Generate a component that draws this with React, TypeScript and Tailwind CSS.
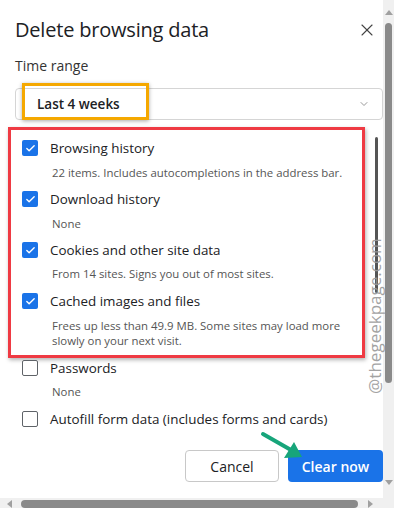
import React from 'react';
import { Check, ChevronDown, X } from 'lucide-react';

const items = [
  { label: 'Browsing history', desc: ['22 items. Includes autocompletions in the address bar.'], checked: true },
  { label: 'Download history', desc: ['None'], checked: true },
  { label: 'Cookies and other site data', desc: ['From 14 sites. Signs you out of most sites.'], checked: true },
  {
    label: 'Cached images and files',
    desc: ['Frees up less than 49.9 MB. Some sites may load more', 'slowly on your next visit.'],
    checked: true,
  },
];

const CheckRow = ({ label, checked }: { label: string; checked: boolean }) => (
  <div className="flex items-center h-[20px] gap-[12px]">
    {checked ? (
      <div className="w-[16px] h-[16px] rounded-[2px] bg-[#1a73e8] flex items-center justify-center">
        <Check className="w-[11px] h-[11px] text-white" strokeWidth={3} />
      </div>
    ) : (
      <div className="w-[16px] h-[16px] rounded-[2px] border-[1.5px] border-[#5f6368] bg-white" />
    )}
    <span className="text-[13.4px] text-[#202124]">{label}</span>
  </div>
);

const Desc = ({ lines, className }: { lines: string[]; className?: string }) => (
  <div
    className={`pl-[30px] text-[11.4px] text-[#555] ${lines.length > 1 ? 'leading-[15px]' : 'leading-[16px]'} ${className ?? ''}`}
  >
    {lines.map((l) => (
      <div key={l}>{l}</div>
    ))}
  </div>
);

export default function App() {
  return (
    <div
      className="w-[394px] h-[508px] flex flex-col bg-white overflow-hidden"
      style={{ fontFamily: '"Open Sans", "Noto Sans", sans-serif' }}
    >
      <div className="flex flex-1 min-h-0">
        {/* Dialog */}
        <div className="flex-1 relative">
          <div className="pl-[15px] pt-[16px] pr-[6px] flex items-center justify-between">
            <h1 className="text-[20px] leading-[28px] font-medium text-[#202124] tracking-[-0.2px]">
              Delete browsing data
            </h1>
            <X className="w-[20px] h-[20px] text-[#444]" strokeWidth={1.3} />
          </div>

          <div className="pl-[15px] mt-[12px] text-[14px] leading-[20px] text-[#333]">Time range</div>

          <div className="relative ml-[15px] mt-[12px] h-[32px] border border-[#d5d5d5] rounded-[4px] flex items-center justify-between pl-[21px] pr-[12px]">
            <span className="text-[13.5px] font-semibold text-[#202124]">Last 4 weeks</span>
            <ChevronDown className="w-[12px] h-[12px] text-[#777]" strokeWidth={1.5} />
            <div className="absolute left-[6px] top-[-6px] w-[127px] h-[37px] border-[3px] border-[#f5a800] shadow-[0_1px_4px_rgba(0,0,0,0.35)]" />
          </div>

          <div className="flex">
            <div className="mt-[7px] ml-[8px] w-[357px] border-[3px] border-[#ef3a43] shadow-[1px_2px_4px_rgba(0,0,0,0.3)] pl-[11px] pt-[8px] pb-[7px]">
              {items.map((it, i) => (
                <div key={it.label} className={i === 0 ? '' : i === 3 ? 'mt-[9px]' : 'mt-[8px]'}>
                  <CheckRow label={it.label} checked={it.checked} />
                  <Desc lines={it.desc} className={i === 2 ? 'mt-[6px]' : 'mt-[7px]'} />
                </div>
              ))}
            </div>
            {/* inner scrollbar */}
            <div className="ml-[10px] mt-[17px] w-[3px] h-[156px] bg-[#555] rounded-full" />
          </div>

          <div className="pl-[22px]">
            <CheckRow label="Passwords" checked={false} />
            <Desc lines={['None']} className="mt-[6px]" />
            <div className="mt-[9px]">
              <CheckRow label="Autofill form data (includes forms and cards)" checked={false} />
            </div>
          </div>

          <div className="mt-[21px] flex justify-end gap-[9px]">
            <button className="w-[94px] h-[32px] rounded-[4px] border border-[#c8c8c8] text-[14px] font-medium text-[#202124] bg-white">
              Cancel
            </button>
            <button className="w-[95px] h-[32px] rounded-[4px] bg-[#1a73e8] text-[14px] font-semibold text-white">
              Clear now
            </button>
          </div>

          {/* watermark */}
          <div className="absolute left-[292px] top-[306px] w-[166px] text-center text-[17px] leading-[20px] text-[#9a9a9a] -rotate-90 opacity-90">
            @thegeekpage.com
          </div>

          {/* green arrow */}
          <svg className="absolute left-[258px] top-[428px]" width="48" height="34" viewBox="0 0 48 34">
            <line x1="5" y1="6" x2="33" y2="22" stroke="#17a57a" strokeWidth="4" strokeLinecap="round" />
            <polygon points="44,29 26,30 36,14" fill="#17a57a" />
          </svg>
        </div>

        {/* page scrollbar */}
        <div className="w-[11px] bg-[#f0f0f0] flex flex-col items-center">
          <div className="mt-[10px] w-0 h-0 border-l-[4px] border-r-[4px] border-b-[5px] border-l-transparent border-r-transparent border-b-[#a0a0a0]" />
          <div className="mt-[8px] w-[7px] h-[360px] rounded-full bg-[#8a8a8a]" />
          <div className="flex-1" />
          <div className="mb-[13px] w-0 h-0 border-l-[4px] border-r-[4px] border-t-[5px] border-l-transparent border-r-transparent border-t-[#a0a0a0]" />
        </div>
      </div>

      {/* horizontal scrollbar */}
      <div className="h-[10px] bg-[#f0f0f0] flex items-start">
        <div className="ml-[7px] mt-[2px] w-0 h-0 border-t-[4px] border-b-[4px] border-r-[5px] border-t-transparent border-b-transparent border-r-[#a0a0a0]" />
        <div className="ml-[9px] mt-[2px] w-[337px] h-[8px] rounded-full bg-[#8a8a8a]" />
        <div className="ml-[10px] mt-[2px] w-0 h-0 border-t-[4px] border-b-[4px] border-l-[5px] border-t-transparent border-b-transparent border-l-[#a0a0a0]" />
      </div>
    </div>
  );
}
